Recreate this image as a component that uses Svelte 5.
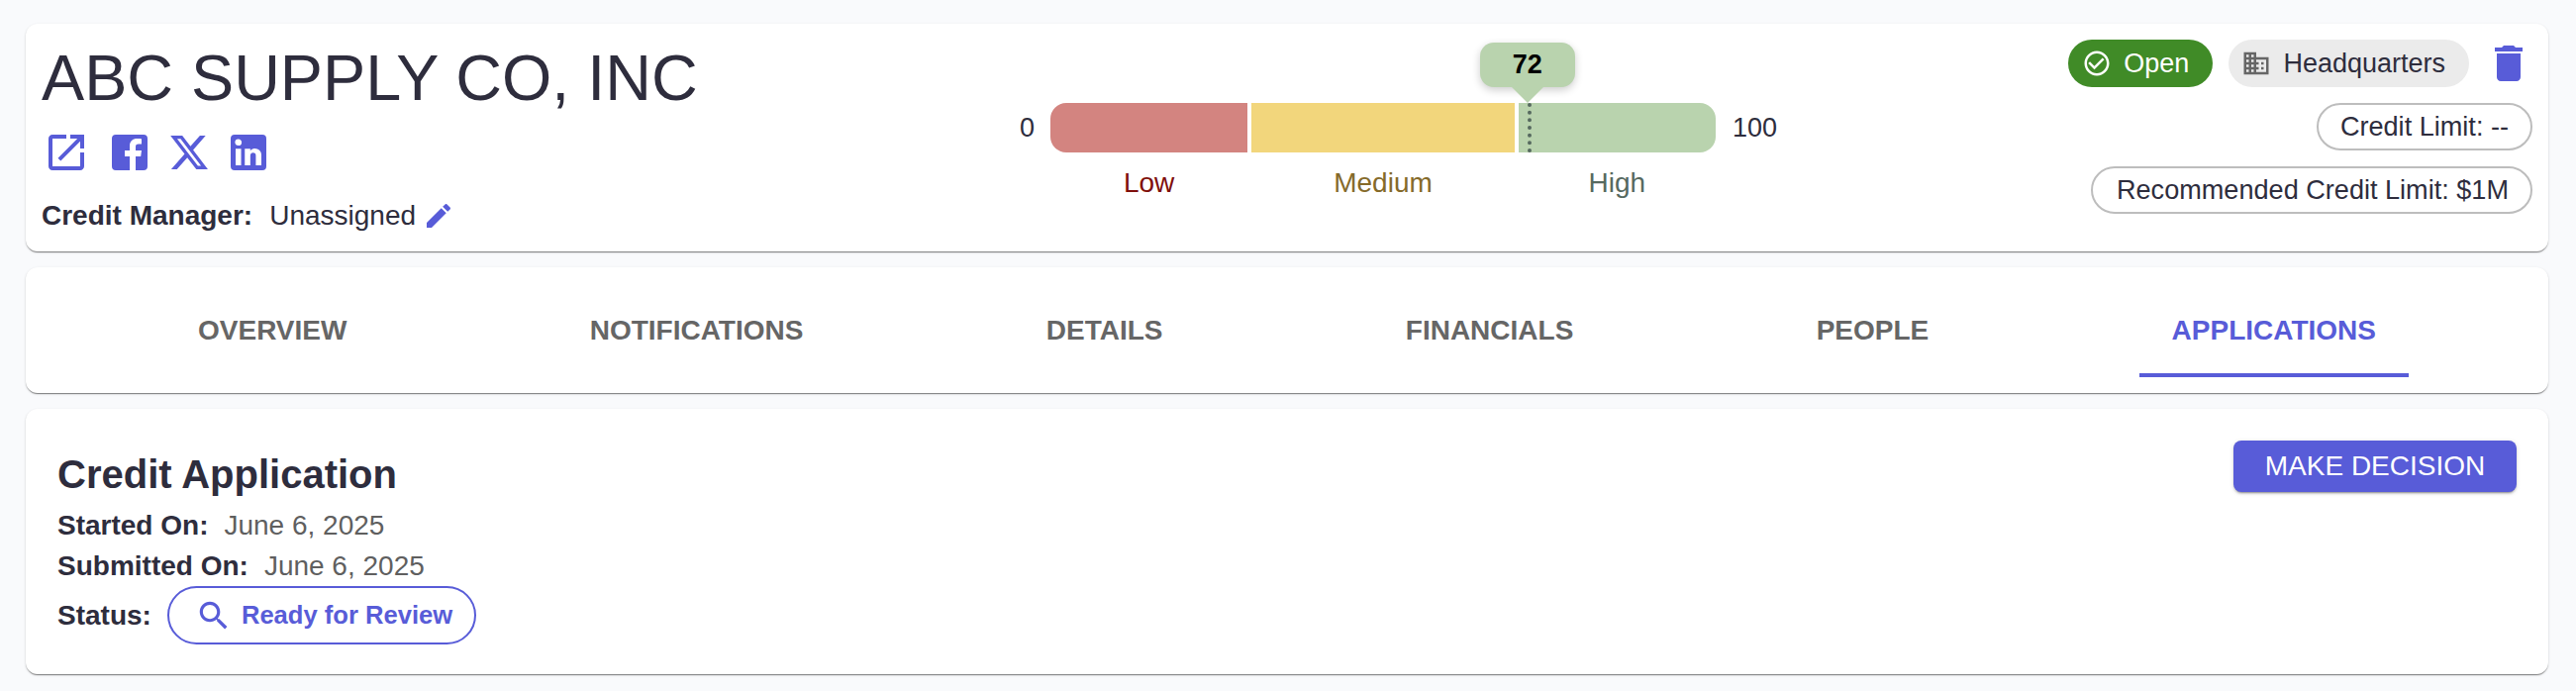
<script lang="ts">
	const tabs = ["Overview", "Notifications", "Details", "Financials", "People", "Applications"];
	let active = $state("Applications");

	const gauge = [
		{ label: "Low", cls: "low" },
		{ label: "Medium", cls: "medium" },
		{ label: "High", cls: "high" }
	];
	const score = 72;
</script>

<div class="page">
	<section class="card header">
		<div class="company">
			<h1>ABC SUPPLY CO, INC</h1>
			<div class="links">
				<svg class="ext" viewBox="0 0 24 24"><path d="M19 19H5V5h7V3H5c-1.11 0-2 .9-2 2v14c0 1.1.89 2 2 2h14c1.1 0 2-.9 2-2v-7h-2v7zM14 3v2h3.59l-9.83 9.83 1.41 1.41L19 6.41V10h2V3h-7z" /></svg>
				<svg viewBox="0 0 24 24"><path d="M5 3h14a2 2 0 0 1 2 2v14a2 2 0 0 1-2 2h-4v-7h2.6l.4-3h-3V9.2c0-.9.3-1.4 1.5-1.4H18V5.1c-.3 0-1.200-.1-2.200-.1-2.300 0-3.800 1.300-3.800 3.800V11H9.500v3H12v7H5a2 2 0 0 1-2-2V5a2 2 0 0 1 2-2z" /></svg>
				<svg class="x" viewBox="0 0 24 24"><path d="M18.244 2.25h3.308l-7.227 8.26 8.502 11.24H16.17l-5.214-6.817L4.99 21.75H1.68l7.73-8.835L1.254 2.25H8.08l4.713 6.231zm-1.161 17.52h1.833L7.084 4.126H5.117z" /></svg>
				<svg viewBox="0 0 24 24"><path d="M19 3a2 2 0 0 1 2 2v14a2 2 0 0 1-2 2H5a2 2 0 0 1-2-2V5a2 2 0 0 1 2-2h14m-.5 15.5v-5.3a3.26 3.26 0 0 0-3.26-3.26c-.85 0-1.84.52-2.32 1.3v-1.11h-2.79v8.37h2.79v-4.93c0-.77.62-1.4 1.39-1.4a1.4 1.4 0 0 1 1.4 1.4v4.93h2.79M6.88 8.56a1.68 1.68 0 0 0 1.68-1.68c0-.93-.75-1.69-1.68-1.69a1.69 1.69 0 0 0-1.69 1.69c0 .93.76 1.68 1.69 1.68m1.39 9.94v-8.37H5.5v8.37h2.77z" /></svg>
			</div>
			<div class="manager">
				<strong>Credit Manager:</strong>
				<span>Unassigned</span>
				<svg class="pencil" viewBox="0 0 24 24"><path d="M3 17.25V21h3.75L17.81 9.94l-3.750-3.750L3 17.250zM20.710 7.040c.39-.39.39-1.020 0-1.410l-2.340-2.340c-.39-.39-1.020-.39-1.410 0l-1.830 1.830 3.750 3.750 1.830-1.830z" /></svg>
			</div>
		</div>

		<div class="gauge">
			<span class="end start">0</span>
			<div class="track">
				<div class="bar">
					{#each gauge as g}
						<div class="segment {g.cls}"></div>
					{/each}
					<div class="marker" style="left: {score}%">
						<div class="bubble">{score}</div>
					</div>
				</div>
				<div class="labels">
					{#each gauge as g}
						<span class="seg-label {g.cls}">{g.label}</span>
					{/each}
				</div>
			</div>
			<span class="end">100</span>
		</div>

		<div class="meta">
			<div class="chips">
				<span class="chip open">
					<svg viewBox="0 0 24 24"><path d="M16.590 7.580 10 14.170l-3.590-3.580L5 12l5 5 8-8zM12 2C6.480 2 2 6.480 2 12s4.480 10 10 10 10-4.480 10-10S17.520 2 12 2zm0 18c-4.420 0-8-3.580-8-8s3.580-8 8-8 8 3.580 8 8-3.580 8-8 8z" /></svg>
					Open
				</span>
				<span class="chip hq">
					<svg viewBox="0 0 24 24"><path d="M12 7V3H2v18h20V7H12zM6 19H4v-2h2v2zm0-4H4v-2h2v2zm0-4H4V9h2v2zm0-4H4V5h2v2zm4 12H8v-2h2v2zm0-4H8v-2h2v2zm0-4H8V9h2v2zm0-4H8V5h2v2zm10 12h-8v-2h2v-2h-2v-2h2v-2h-2V9h8v10zm-2-8h-2v2h2v-2zm0 4h-2v2h2v-2z" /></svg>
					Headquarters
				</span>
				<svg class="trash" viewBox="0 0 24 24"><path d="M6 19c0 1.100.9 2 2 2h8c1.100 0 2-.9 2-2V7H6v12zM19 4h-3.500l-1-1h-5l-1 1H5v2h14V4z" /></svg>
			</div>
			<span class="limit">Credit Limit: --</span>
			<span class="limit">Recommended Credit Limit: $1M</span>
		</div>
	</section>

	<nav class="card tabs">
		{#each tabs as tab}
			<button class="tab" class:active={active === tab} onclick={() => (active = tab)}>{tab}</button>
		{/each}
	</nav>

	<section class="card application">
		<div class="details">
			<h2>Credit Application</h2>
			<div class="row"><strong>Started On:</strong><span>June 6, 2025</span></div>
			<div class="row"><strong>Submitted On:</strong><span>June 6, 2025</span></div>
			<div class="row status">
				<strong>Status:</strong>
				<span class="status-chip">
					<svg viewBox="0 0 24 24"><path d="M15.500 14h-.79l-.28-.27C15.410 12.590 16 11.110 16 9.500 16 5.910 13.090 3 9.500 3S3 5.910 3 9.500 5.910 16 9.500 16c1.610 0 3.090-.59 4.230-1.570l.27.28v.79l5 4.990L20.490 19l-4.990-5zm-6 0C7.010 14 5 11.990 5 9.500S7.010 5 9.500 5 14 7.010 14 9.500 11.990 14 9.500 14z" /></svg>
					Ready for Review
				</span>
			</div>
		</div>
		<button class="decision">Make Decision</button>
	</section>
</div>

<style>
	:global(body) {
		background: #f9fafc;
		font-family: "Liberation Sans", Arial, sans-serif;
		color: #2e2d3d;
	}

	.page {
		display: flex;
		flex-direction: column;
		gap: 16px;
		padding: 24px 28px 17px 26px;
	}

	.card {
		background: #fff;
		border-radius: 12px;
		box-shadow: 0 2px 1px -1px rgba(0, 0, 0, 0.3), 0 1px 1px 0 rgba(0, 0, 0, 0.2), 0 1px 3px 0 rgba(0, 0, 0, 0.12);
	}

	svg {
		fill: currentColor;
		flex: none;
		display: block;
	}

	.header {
		display: flex;
		height: 230px;
		box-sizing: border-box;
		padding: 16px;
	}

	.company {
		width: 958px;
		flex: none;
	}

	h1 {
		margin: 0;
		font-size: 64.7px;
		font-weight: 400;
		line-height: 78px;
	}

	.links {
		display: flex;
		gap: 12px;
		margin-top: 12px;
		margin-left: 1px;
		color: #585cd8;
	}

	.links svg {
		width: 48px;
		height: 48px;
	}

	.links .ext {
		margin-right: 4px;
	}

	.links .x {
		padding: 3px;
		box-sizing: border-box;
	}

	.manager {
		display: flex;
		align-items: center;
		font-size: 28px;
		margin-top: 24px;
	}

	.manager span {
		margin-left: 17px;
	}

	.pencil {
		width: 32px;
		height: 32px;
		margin-left: 7px;
		color: #585cd8;
	}

	.gauge {
		display: flex;
		align-items: flex-start;
		margin-top: 64px;
	}

	.end {
		font-size: 27px;
		line-height: 50px;
		width: 61px;
		text-align: right;
		padding-right: 16px;
		box-sizing: border-box;
	}

	.end:last-child {
		text-align: left;
		padding: 0 0 0 17px;
	}

	.track {
		width: 672px;
	}

	.bar {
		position: relative;
		display: flex;
		gap: 4px;
		height: 50px;
	}

	.labels {
		display: flex;
		gap: 4px;
		margin-top: 15px;
	}

	.segment.low {
		flex: 3;
		background: #d38480;
		border-radius: 16px 0 0 16px;
	}

	.segment.medium {
		flex: 4;
		background: #f2d67c;
	}

	.segment.high {
		flex: 3;
		background: #b9d3ae;
		border-radius: 0 16px 16px 0;
	}

	.seg-label {
		text-align: center;
		font-size: 28px;
	}

	.seg-label.low {
		flex: 3;
		color: #7f0f0b;
	}

	.seg-label.medium {
		flex: 4;
		color: #856a2a;
	}

	.seg-label.high {
		flex: 3;
		color: #56695f;
	}

	.marker {
		position: absolute;
		top: 0;
		bottom: 0;
		border-left: 4px dotted #56695f;
		margin-left: -2px;
	}

	.bubble {
		position: absolute;
		bottom: 66px;
		left: -52px;
		width: 96px;
		height: 45px;
		background: #b9d3ae;
		border-radius: 14px;
		text-align: center;
		font-size: 27px;
		font-weight: 700;
		line-height: 45px;
		color: #000;
		box-shadow: 0 3px 8px rgba(0, 0, 0, 0.2);
	}

	.bubble::after {
		content: "";
		position: absolute;
		left: 32px;
		top: 45px;
		border-left: 16px solid transparent;
		border-right: 16px solid transparent;
		border-top: 16px solid #b9d3ae;
	}

	.meta {
		display: flex;
		flex-direction: column;
		align-items: flex-end;
		gap: 16px;
		margin-left: auto;
	}

	.chips {
		display: flex;
		align-items: center;
		gap: 16px;
	}

	.chip {
		display: flex;
		align-items: center;
		height: 48px;
		border-radius: 24px;
		font-size: 27px;
		box-sizing: border-box;
	}

	.chip svg {
		width: 30px;
		height: 30px;
	}

	.open {
		background: #408b27;
		color: #fff;
		padding: 0 24px 0 14px;
		gap: 12px;
	}

	.hq {
		background: #ebebeb;
		padding: 0 24px 0 13px;
		gap: 12px;
	}

	.hq svg {
		color: #666;
	}

	.trash {
		width: 48px;
		height: 48px;
		color: #585cd8;
	}

	.limit {
		border: 2px solid #bdbdbd;
		border-radius: 24px;
		height: 48px;
		box-sizing: border-box;
		padding: 0 22px;
		font-size: 27.1px;
		line-height: 44px;
		white-space: nowrap;
	}

	.limit:last-child {
		padding-left: 24px;
	}

	.tabs {
		display: flex;
		justify-content: space-between;
		height: 127px;
		padding: 0 141px;
	}

	.tab {
		background: none;
		border: none;
		border-bottom: 4px solid transparent;
		height: 111px;
		padding: 21px 33px 0;
		font-family: inherit;
		font-size: 28px;
		font-weight: 700;
		text-transform: uppercase;
		color: #666;
		cursor: pointer;
	}

	.tab.active {
		color: #585cd8;
		border-bottom-color: #585cd8;
	}

	.application {
		display: flex;
		justify-content: space-between;
		align-items: flex-start;
		height: 268px;
		box-sizing: border-box;
		padding: 32px 32px 0;
	}

	.details {
		padding-top: 7px;
	}

	h2 {
		margin: 0 0 4px;
		font-size: 40px;
		line-height: 54px;
		font-weight: 700;
	}

	.row {
		display: flex;
		align-items: center;
		gap: 16px;
		font-size: 28px;
		line-height: 41px;
	}

	.row span {
		color: #5f5f5f;
	}

	.row .status-chip {
		display: flex;
		align-items: center;
		gap: 9px;
		height: 59px;
		box-sizing: border-box;
		padding: 0 22px 0 26px;
		border: 2px solid #585cd8;
		border-radius: 30px;
		color: #585cd8;
		font-size: 25.6px;
		font-weight: 700;
	}

	.status-chip svg {
		width: 38px;
		height: 38px;
	}

	.decision {
		width: 286px;
		height: 52px;
		background: #585cd8;
		color: #fff;
		border: none;
		border-radius: 8px;
		font-family: inherit;
		font-size: 28px;
		text-transform: uppercase;
		box-shadow: 0 3px 1px -2px rgba(0, 0, 0, 0.2), 0 2px 2px 0 rgba(0, 0, 0, 0.14), 0 1px 5px 0 rgba(0, 0, 0, 0.12);
		cursor: pointer;
	}
</style>
